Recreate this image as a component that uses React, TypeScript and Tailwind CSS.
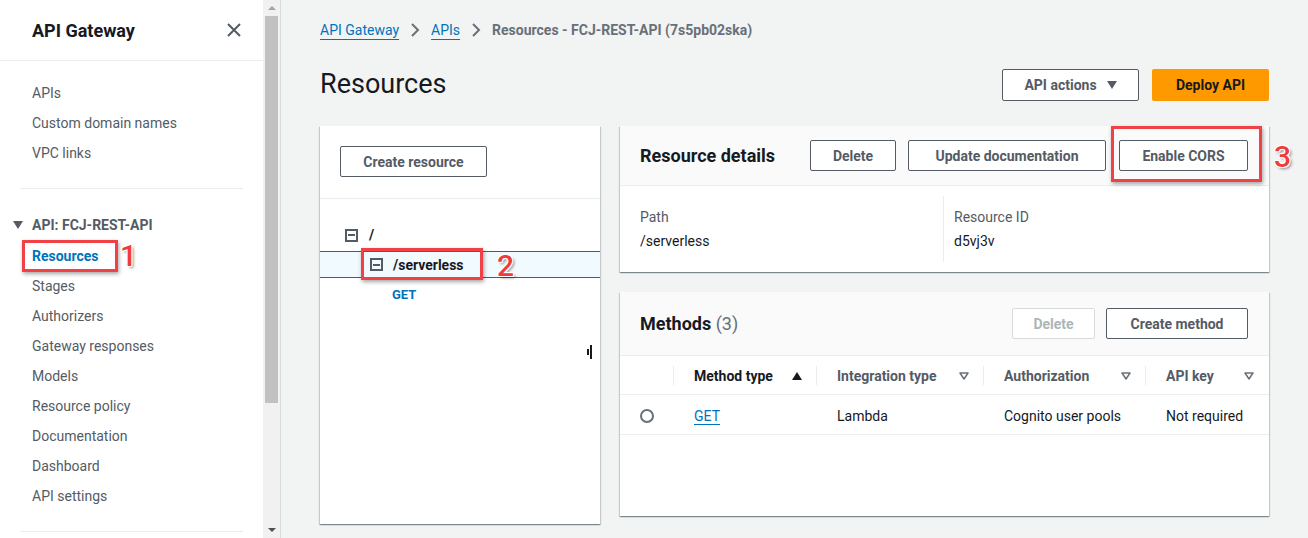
import React from 'react';

const font = { fontFamily: 'Roboto, "Noto Sans", Arial, sans-serif' };

const navItems = ['Stages', 'Authorizers', 'Gateway responses', 'Models', 'Resource policy', 'Documentation', 'Dashboard', 'API settings'];

const Marker: React.FC<{ n: string; className: string }> = ({ n, className }) => (
  <span
    className={`absolute text-[30px] leading-none font-medium text-[#ee3b3b] [text-shadow:-1px_-1px_0_#fff,1px_-1px_0_#fff,-1px_1px_0_#fff,1px_1px_0_#fff,2px_2px_3px_rgba(0,0,0,0.45)] ${className}`}
  >
    {n}
  </span>
);

const MinusBox: React.FC = () => (
  <span className="inline-flex w-[13px] h-[13px] border-2 border-[#545b64] items-center justify-center">
    <span className="w-[7px] h-[2px] bg-[#545b64]" />
  </span>
);

const Btn: React.FC<{ children: React.ReactNode; className?: string; disabled?: boolean }> = ({ children, className = '', disabled }) => (
  <button
    className={`h-[31px] px-5 border rounded-[2px] text-sm font-bold bg-white ${
      disabled ? 'border-[#d5dbdb] text-[#aab7b8]' : 'border-[#545b64] text-[#545b64]'
    } ${className}`}
  >
    {children}
  </button>
);

const Sidebar: React.FC = () => (
  <aside className="w-[263px] shrink-0 bg-white h-full flex flex-col">
    <div className="h-[61px] border-b border-[#eaeded] flex items-center justify-between pl-8 pr-[20px]">
      <span className="text-[18px] font-bold text-[#16191f]">API Gateway</span>
      <svg width="16" height="16" viewBox="0 0 16 16" className="mr-[1px]">
        <path d="M2 2 L14 14 M14 2 L2 14" stroke="#545b64" strokeWidth="2" />
      </svg>
    </div>
    <ul className="pt-[17px] text-sm text-[#545b64]">
      {['APIs', 'Custom domain names', 'VPC links'].map((t) => (
        <li key={t} className="h-[30px] flex items-center pl-8">{t}</li>
      ))}
    </ul>
    <div className="mx-5 mt-[20px] border-t border-[#eaeded]" />
    <div className="mt-[26px] flex items-center h-[20px] text-sm font-bold text-[#545b64]">
      <span className="w-[32px] pl-[13px] flex">
        <svg width="10" height="8" viewBox="0 0 10 8"><path d="M0 0 H10 L5 8 Z" fill="#545b64" /></svg>
      </span>
      <span>API: FCJ-REST-API</span>
    </div>
    <ul className="mt-[6px] text-sm text-[#545b64] relative">
      <li className="h-[30px] flex items-center pl-8 font-bold text-[#0073bb] relative">
        Resources
        <span className="absolute left-[22px] top-[-1px] w-[96px] h-[32px] border-[3px] border-[#ef4146] shadow-[1px_2px_4px_rgba(0,0,0,0.35)]" />
        <Marker n="1" className="left-[120px] top-[0px]" />
      </li>
      {navItems.map((t) => (
        <li key={t} className="h-[30px] flex items-center pl-8">{t}</li>
      ))}
    </ul>
    <div className="mx-5 mt-[20px] border-t border-[#eaeded]" />
  </aside>
);

const Scrollbar: React.FC = () => (
  <div className="w-[18px] shrink-0 h-full bg-[#f1f1f1] border-r border-[#d5dbdb] flex flex-col items-center">
    <div className="h-[16px] flex items-center justify-center">
      <span className="w-0 h-0 border-l-[4px] border-r-[4px] border-b-[4px] border-l-transparent border-r-transparent border-b-[#a3a3a3]" />
    </div>
    <div className="w-[13px] h-[387px] bg-[#c1c1c1]" />
    <div className="flex-1" />
    <div className="h-[16px] flex items-center justify-center">
      <span className="w-0 h-0 border-l-[4px] border-r-[4px] border-t-[4px] border-l-transparent border-r-transparent border-t-[#505050]" />
    </div>
  </div>
);

const panel = 'bg-white shadow-[0_1px_1px_0_rgba(0,28,36,0.3),1px_1px_1px_0_rgba(0,28,36,0.15),-1px_1px_1px_0_rgba(0,28,36,0.15)]';

const ResourceTree: React.FC = () => (
  <div className={`${panel} w-[280px] h-[398px] relative flex flex-col`}>
    <div className="h-[73px] border-b border-[#eaeded] px-5 pt-[20px]">
      <Btn className="h-[30px] w-[147px] px-0">Create resource</Btn>
    </div>
    <div className="pt-[25px]">
      <div className="h-[22px] flex items-center pl-[25px] gap-[11px] text-sm font-bold text-[#16191f]">
        <MinusBox />
        <span>/</span>
      </div>
      <div className="mt-[5px] h-[27px] bg-[#f1faff] border-y border-[#0073bb] flex items-center pl-[50px] gap-[10px] text-sm font-bold text-[#16191f] relative">
        <MinusBox />
        <span>/serverless</span>
        <span className="absolute left-[41px] top-[-4px] w-[122px] h-[32px] border-[3px] border-[#ef4146] shadow-[1px_2px_4px_rgba(0,0,0,0.35)]" />
        <Marker n="2" className="left-[177px] top-[-1px]" />
      </div>
      <div className="h-[33px] flex items-center pl-[72px] text-[13px] font-bold text-[#0073bb]">GET</div>
    </div>
    <div className="absolute right-[8px] top-[219px] flex items-center gap-[1px]">
      <span className="w-[2px] h-[6px] bg-[#16191f]" />
      <span className="w-[2px] h-[14px] bg-[#16191f]" />
    </div>
  </div>
);

const ResourceDetails: React.FC = () => (
  <div className={`${panel} h-[146px] flex flex-col`}>
    <div className="h-[60px] bg-[#fafafa] border-b border-[#eaeded] flex items-center pl-5 pr-[21px]">
      <span className="text-[18px] font-bold text-[#16191f] flex-1">Resource details</span>
      <div className="flex gap-[12px] relative">
        <Btn className="w-[86px] px-0">Delete</Btn>
        <Btn className="w-[198px] px-0">Update documentation</Btn>
        <Btn className="w-[129px] px-0 ml-[1px]">Enable CORS</Btn>
        <span className="absolute right-[-14px] top-[-14px] w-[151px] h-[56px] border-[3px] border-[#ef4146] shadow-[1px_2px_4px_rgba(0,0,0,0.35)]" />
        <Marker n="3" className="right-[-43px] top-[2px]" />
      </div>
    </div>
    <div className="flex flex-1 py-[10px] text-sm">
      <div className="w-[324px] border-r border-[#eaeded] pl-5 pt-[11px]">
        <div className="text-[#545b64]">Path</div>
        <div className="mt-[4px] text-[#16191f]">/serverless</div>
      </div>
      <div className="pl-[10px] pt-[11px]">
        <div className="text-[#545b64]">Resource ID</div>
        <div className="mt-[4px] text-[#16191f]">d5vj3v</div>
      </div>
    </div>
  </div>
);

const SortDown: React.FC = () => (
  <svg width="10" height="8" viewBox="0 0 10 8">
    <path d="M1 1 H9 L5 7 Z" fill="none" stroke="#687078" strokeWidth="1.5" strokeLinejoin="round" />
  </svg>
);

const Methods: React.FC = () => (
  <div className={`${panel} h-[224px] flex flex-col`}>
    <div className="h-[64px] bg-[#fafafa] border-b border-[#eaeded] flex items-center pl-5 pr-[21px]">
      <span className="flex-1 text-[18px] text-[#16191f]">
        <span className="font-bold">Methods</span> <span className="text-[#687078]">(3)</span>
      </span>
      <div className="flex gap-[11px]">
        <Btn disabled className="w-[83px] px-0">Delete</Btn>
        <Btn className="w-[142px] px-0">Create method</Btn>
      </div>
    </div>
    <div className="grid grid-cols-[54px_143px_167px_162px_1fr] text-sm">
      <div className="h-[39px] border-b border-[#eaeded] flex items-center">
        <span className="ml-auto w-px h-[19px] bg-[#eaeded]" />
      </div>
      <div className="h-[39px] border-b border-[#eaeded] flex items-center pl-[20px] pt-[1px] font-bold text-[#16191f]">
        <span className="flex-1">Method type</span>
        <svg width="10" height="8" viewBox="0 0 10 8" className="mr-[14px]"><path d="M5 0 L10 8 H0 Z" fill="#16191f" /></svg>
        <span className="w-px h-[19px] bg-[#eaeded]" />
      </div>
      <div className="h-[39px] border-b border-[#eaeded] flex items-center pl-[20px] pt-[1px] font-bold text-[#545b64]">
        <span className="flex-1">Integration type</span>
        <span className="mr-[14px] flex"><SortDown /></span>
        <span className="w-px h-[19px] bg-[#eaeded]" />
      </div>
      <div className="h-[39px] border-b border-[#eaeded] flex items-center pl-[20px] pt-[1px] font-bold text-[#545b64]">
        <span className="flex-1">Authorization</span>
        <span className="mr-[14px] flex"><SortDown /></span>
        <span className="w-px h-[19px] bg-[#eaeded]" />
      </div>
      <div className="h-[39px] border-b border-[#eaeded] flex items-center pl-[20px] pr-[15px] pt-[1px] font-bold text-[#545b64]">
        <span className="flex-1">API key</span>
        <SortDown />
      </div>

      <div className="h-[40px] border-b border-[#eaeded] flex items-center pl-[20px] pt-[2px]">
        <span className="w-[14px] h-[14px] rounded-full border-2 border-[#687078]" />
      </div>
      <div className="h-[40px] border-b border-[#eaeded] flex items-center pl-[20px] pt-[2px]">
        <span className="text-[#0073bb] underline underline-offset-[3px]">GET</span>
      </div>
      <div className="h-[40px] border-b border-[#eaeded] flex items-center pl-[20px] pt-[2px] text-[#16191f]">Lambda</div>
      <div className="h-[40px] border-b border-[#eaeded] flex items-center pl-[20px] pt-[2px] text-[#16191f]">Cognito user pools</div>
      <div className="h-[40px] border-b border-[#eaeded] flex items-center pl-[20px] pt-[2px] text-[#16191f]">Not required</div>
    </div>
  </div>
);

export default function App() {
  return (
    <div className="w-[1308px] h-[538px] flex overflow-hidden bg-[#f2f3f3]" style={font}>
      <Sidebar />
      <Scrollbar />
      <main className="flex-1 pl-[39px] pr-[39px]">
        <nav className="h-[60px] flex items-center text-sm gap-[11px]">
          <span className="text-[#0073bb] underline underline-offset-[4px]">API Gateway</span>
          <svg width="10" height="14" viewBox="0 0 10 14"><path d="M2 1 L8 7 L2 13" fill="none" stroke="#687078" strokeWidth="2" /></svg>
          <span className="text-[#0073bb] underline underline-offset-[4px]">APIs</span>
          <svg width="10" height="14" viewBox="0 0 10 14"><path d="M2 1 L8 7 L2 13" fill="none" stroke="#687078" strokeWidth="2" /></svg>
          <span className="font-bold text-[#687078]">Resources - FCJ-REST-API (7s5pb02ska)</span>
        </nav>
        <div className="h-[66px] flex items-start pt-[9px]">
          <h1 className="flex-1 text-[27px] leading-[30px] text-[#16191f] pt-[0px]">Resources</h1>
          <Btn className="w-[137px] px-0 h-[32px] flex items-center justify-center gap-[10px]">
            API actions
            <svg width="10" height="8" viewBox="0 0 10 8"><path d="M0 0 H10 L5 8 Z" fill="#545b64" /></svg>
          </Btn>
          <button className="ml-[13px] w-[117px] h-[32px] rounded-[2px] bg-[#ff9900] text-sm font-bold text-[#16191f]">Deploy API</button>
        </div>
        <div className="flex gap-5">
          <ResourceTree />
          <div className="flex-1 flex flex-col gap-5">
            <ResourceDetails />
            <Methods />
          </div>
        </div>
      </main>
    </div>
  );
}
